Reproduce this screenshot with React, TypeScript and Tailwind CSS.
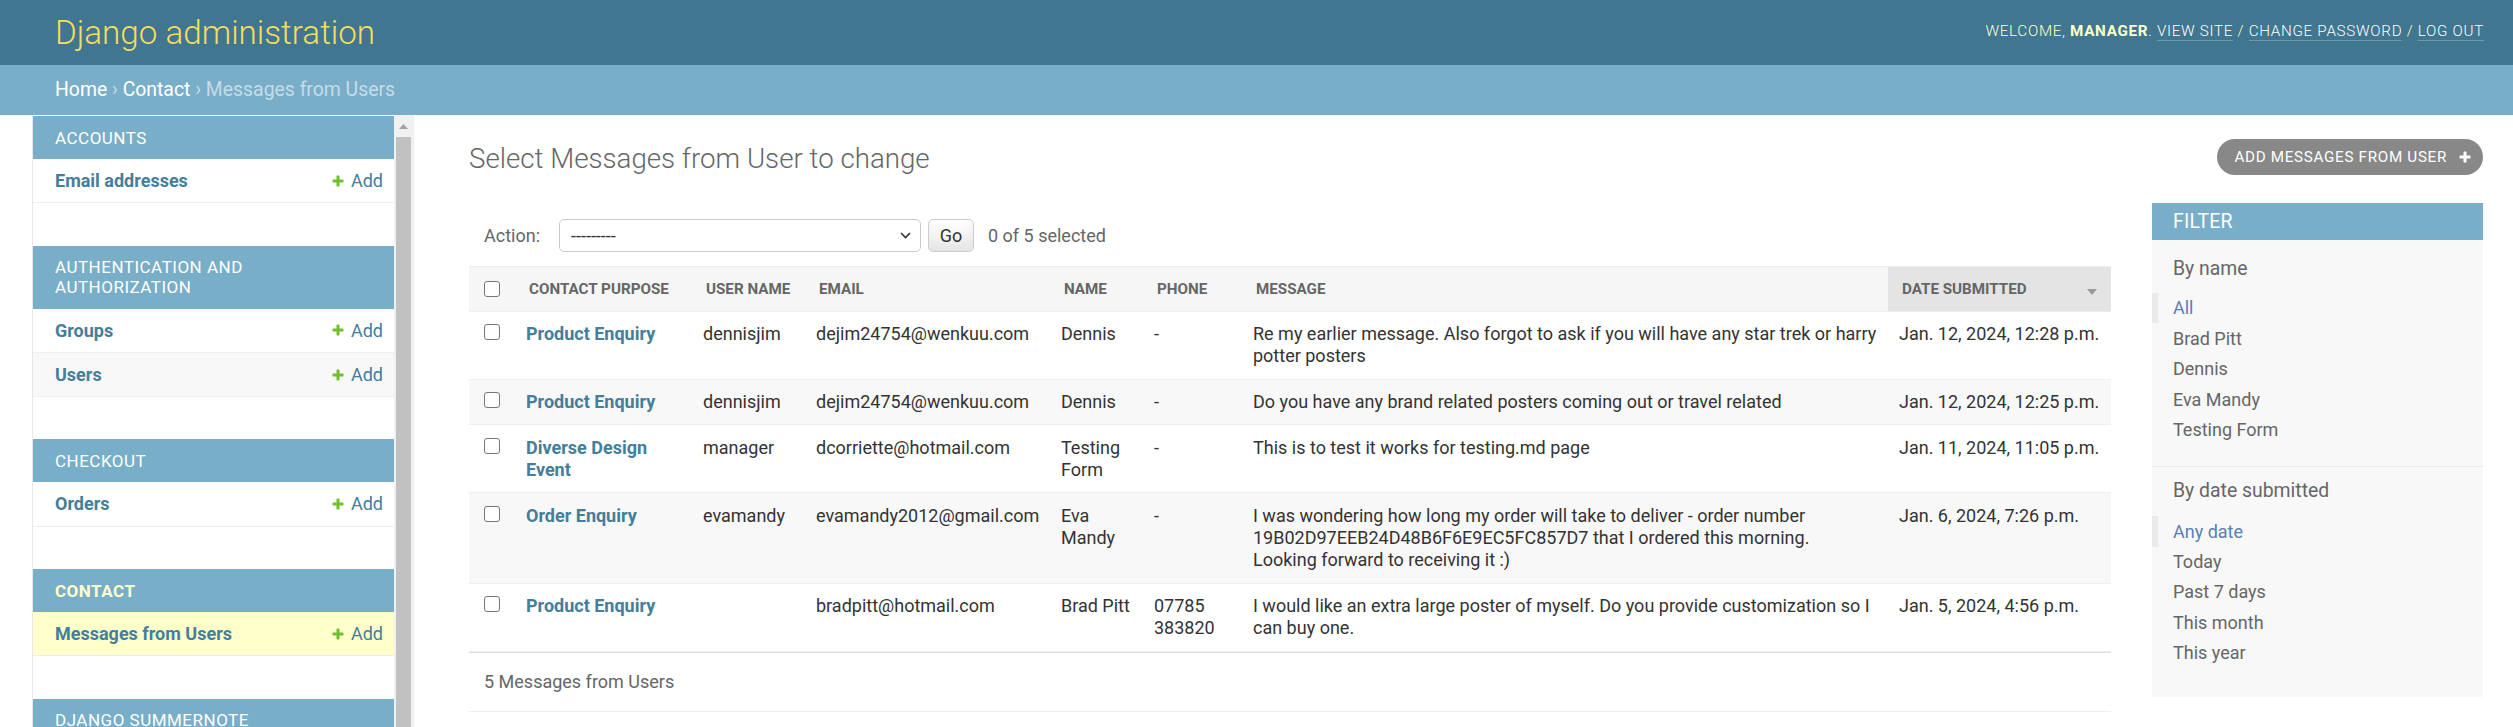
import React from "react"

const PlusIcon = ({ className = "" }: { className?: string }) => (
  <svg viewBox="0 0 1792 1792" className={className} aria-hidden="true">
    <path
      fill="currentColor"
      d="M1600 796v192q0 40-28 68t-68 28h-416v416q0 40-28 68t-68 28h-192q-40 0-68-28t-28-68v-416h-416q-40 0-68-28t-28-68v-192q0-40 28-68t68-28h416v-416q0-40 28-68t68-28h192q40 0 68 28t28 68v416h416q40 0 68 28t28 68z"
    />
  </svg>
)

const Checkbox = ({ className = "" }: { className?: string }) => (
  <input
    type="checkbox"
    className={`mx-auto block h-[16px] w-[16px] appearance-none rounded-[3px] border border-[#767676] bg-white ${className}`}
  />
)

const modules = [
  { name: "Accounts", models: ["Email addresses"] },
  { name: "Authentication and Authorization", models: ["Groups", "Users"] },
  { name: "Checkout", models: ["Orders"] },
  { name: "Contact", models: ["Messages from Users"], current: true },
  { name: "Django Summernote", models: ["Attachments"] },
  { name: "Home", models: ["Posters"] },
]

const rows = [
  {
    purpose: "Product Enquiry",
    user: "dennisjim",
    email: "dejim24754@wenkuu.com",
    name: "Dennis",
    phone: "-",
    message: ["Re my earlier message. Also forgot to ask if you will have any star trek or harry", "potter posters"],
    date: "Jan. 12, 2024, 12:28 p.m.",
  },
  {
    purpose: "Product Enquiry",
    user: "dennisjim",
    email: "dejim24754@wenkuu.com",
    name: "Dennis",
    phone: "-",
    message: ["Do you have any brand related posters coming out or travel related"],
    date: "Jan. 12, 2024, 12:25 p.m.",
  },
  {
    purpose: "Diverse Design Event",
    user: "manager",
    email: "dcorriette@hotmail.com",
    name: "Testing Form",
    phone: "-",
    message: ["This is to test it works for testing.md page"],
    date: "Jan. 11, 2024, 11:05 p.m.",
  },
  {
    purpose: "Order Enquiry",
    user: "evamandy",
    email: "evamandy2012@gmail.com",
    name: "Eva Mandy",
    phone: "-",
    message: [
      "I was wondering how long my order will take to deliver - order number",
      "19B02D97EEB24D48B6F6E9EC5FC857D7 that I ordered this morning.",
      "Looking forward to receiving it :)",
    ],
    date: "Jan. 6, 2024, 7:26 p.m.",
  },
  {
    purpose: "Product Enquiry",
    user: "",
    email: "bradpitt@hotmail.com",
    name: "Brad Pitt",
    phone: "07785 383820",
    message: ["I would like an extra large poster of myself. Do you provide customization so I", "can buy one."],
    date: "Jan. 5, 2024, 4:56 p.m.",
  },
]

const filters = [
  { title: "By name", items: ["All", "Brad Pitt", "Dennis", "Eva Mandy", "Testing Form"] },
  { title: "By date submitted", items: ["Any date", "Today", "Past 7 days", "This month", "This year"] },
]

const columns = ["Contact purpose", "User name", "Email", "Name", "Phone", "Message"]

export default function App() {
  return (
    <div className="flex h-screen flex-col overflow-hidden bg-white font-['Roboto',sans-serif] text-[#333]">
      <header className="flex h-[65px] shrink-0 items-center justify-between bg-[#417690] pl-[55px] pr-[29px]">
        <a className="text-[33.2px] font-light text-[#f5dd5d]">Django administration</a>
        <div className="pb-[3px] text-[15.2px] font-light uppercase leading-[26px] tracking-[0.7px] text-[#ffc]">
          Welcome, <strong className="font-bold">manager</strong>.{" "}
          <a className="border-b border-white/25 text-white">View site</a> /{" "}
          <a className="border-b border-white/25 text-white">Change password</a> /{" "}
          <a className="border-b border-white/25 text-white">Log out</a>
        </div>
      </header>

      <div className="flex h-[50px] shrink-0 items-center bg-[#79aec8] px-[55px] text-[19.4px] text-[#c4dce8]">
        <a className="text-white">Home</a>&nbsp;›&nbsp;<a className="text-white">Contact</a>&nbsp;›&nbsp;Messages from Users
      </div>

      <div className="flex min-h-0 flex-1">
        <div className="w-[33px] shrink-0 border-r border-[#e8e8e8]" />

        <aside className="flex w-[381px] shrink-0 border-r border-[#eee]">
          <div className="min-w-0 flex-1 overflow-hidden pt-[1px]">
            {modules.map((m) => (
              <div key={m.name} className="mb-[42.3px]">
                <div
                  className={`bg-[#79aec8] px-[22px] py-[11.5px] text-[17px] uppercase leading-[20px] tracking-[0.5px] ${
                    m.current ? "font-bold text-[#ffc]" : "text-white"
                  }`}
                >
                  {m.name}
                </div>
                {m.models.map((model, i) => (
                  <div
                    key={model}
                    className={`flex items-center justify-between border-b border-[#eee] py-[11px] pl-[22px] pr-[11px] text-[18px] leading-[21.3px] text-[#447e9b] ${
                      m.current ? "bg-[#ffc]" : i % 2 === 1 ? "bg-[#f8f8f8]" : "bg-white"
                    }`}
                  >
                    <a className="font-bold">{model}</a>
                    <a className="flex items-center gap-[6px]">
                      <PlusIcon className="h-[14px] w-[14px] text-[#70bf2b]" />
                      Add
                    </a>
                  </div>
                ))}
              </div>
            ))}
          </div>
          <div className="flex w-[19px] shrink-0 flex-col bg-[#f1f1f1]">
            <div className="flex h-[22px] items-center justify-center">
              <svg width="9" height="5" viewBox="0 0 9 5">
                <path d="M0 5 L4.5 0 L9 5Z" fill="#a3a3a3" />
              </svg>
            </div>
            <div className="mx-[2px] flex-1 bg-[#c1c1c1]" />
          </div>
        </aside>

        <main className="min-w-0 flex-1 pl-[55px] pr-[30px] pt-[24px]">
          <div className="flex items-end justify-between">
            <h1 className="text-[27.7px] font-light leading-[32.5px] text-[#666]">Select Messages from User to change</h1>
            <a className="flex h-[36px] items-center gap-[11px] rounded-full bg-[#888] pl-[17px] pr-[11px] text-[15.2px] uppercase tracking-[0.7px] text-white">
              Add Messages from User
              <PlusIcon className="h-[14px] w-[14px]" />
            </a>
          </div>

          <div className="mt-[27.7px] flex items-start">
            <div className="min-w-0 flex-1">
              <div className="flex items-center pb-[14px] pl-[15px] pt-[16px] text-[18px] text-[#666]">
                <label>Action:</label>
                <div className="ml-[19px] flex h-[33px] w-[362px] items-center justify-between rounded-[5px] border border-[#ccc] bg-white pl-[11px] pr-[9px] text-[#333]">
                  <span>---------</span>
                  <svg width="11" height="7" viewBox="0 0 11 7">
                    <path d="M1 1 L5.5 5.5 L10 1" fill="none" stroke="#333" strokeWidth="1.6" />
                  </svg>
                </div>
                <button className="ml-[7px] h-[33px] w-[46px] rounded-[5px] border border-[#ccc] bg-white text-[18px] text-[#333] shadow-[inset_0_-21px_28px_-14px_rgba(0,0,0,0.15)]">
                  Go
                </button>
                <span className="ml-[14px]">0 of 5 selected</span>
              </div>

              <table className="w-full table-fixed border-collapse">
                <colgroup>
                  <col className="w-[46px]" />
                  <col className="w-[177px]" />
                  <col className="w-[113px]" />
                  <col className="w-[245px]" />
                  <col className="w-[93px]" />
                  <col className="w-[99px]" />
                  <col className="w-[646px]" />
                  <col className="w-[223px]" />
                </colgroup>
                <thead>
                  <tr>
                    <th className="border-y border-[#eee] bg-[#f6f6f6] py-[11px] align-middle">
                      <Checkbox />
                    </th>
                    {columns.map((c) => (
                      <th
                        key={c}
                        className="whitespace-nowrap border-y border-[#eee] bg-[#f6f6f6] px-[14px] py-[11px] text-left text-[15.2px] font-bold uppercase leading-[22px] text-[#666]"
                      >
                        {c}
                      </th>
                    ))}
                    <th className="whitespace-nowrap border-y border-[#eee] bg-[#e4e4e4] px-[14px] py-[11px] text-left text-[15.2px] font-bold uppercase leading-[22px] text-[#666]">
                      <div className="flex items-center justify-between">
                        <span>Date submitted</span>
                        <svg width="10" height="6" viewBox="0 0 10 6" className="mt-[6px]">
                          <path d="M0 0 L10 0 L5 6Z" fill="#9a9a9a" />
                        </svg>
                      </div>
                    </th>
                  </tr>
                </thead>
                <tbody className="text-[18px] leading-[22.2px]">
                  {rows.map((r, i) => (
                    <tr key={i} className={i % 2 === 1 ? "bg-[#f8f8f8]" : "bg-white"}>
                      <td className="border-b border-[#eee] px-[11px] py-[11.3px] align-top">
                        <Checkbox className="mt-[1px]" />
                      </td>
                      <th className="border-b border-[#eee] px-[11px] py-[11.3px] text-left align-top font-bold text-[#447e9b]">
                        <a>{r.purpose}</a>
                      </th>
                      <td className="border-b border-[#eee] px-[11px] py-[11.3px] align-top">{r.user}</td>
                      <td className="whitespace-nowrap border-b border-[#eee] px-[11px] py-[11.3px] align-top">{r.email}</td>
                      <td className="border-b border-[#eee] px-[11px] py-[11.3px] align-top">{r.name}</td>
                      <td className="border-b border-[#eee] px-[11px] py-[11.3px] align-top">{r.phone}</td>
                      <td className="whitespace-nowrap border-b border-[#eee] px-[11px] py-[11.3px] align-top">
                        {r.message.map((line, j) => (
                          <div key={j}>{line}</div>
                        ))}
                      </td>
                      <td className="whitespace-nowrap border-b border-[#eee] px-[11px] py-[11.3px] align-top">{r.date}</td>
                    </tr>
                  ))}
                </tbody>
              </table>

              <p className="border-y border-b-[#eee] border-t-[#ddd] px-[15px] py-[14px] text-[18px] leading-[30px] text-[#666]">
                5 Messages from Users
              </p>
            </div>

            <div className="ml-[41px] w-[331px] shrink-0 bg-[#f8f8f8]">
              <h2 className="bg-[#79aec8] px-[21px] py-[7px] text-[19.4px] uppercase leading-[23px] tracking-[0.2px] text-white">
                Filter
              </h2>
              {filters.map((f, fi) => (
                <div key={f.title}>
                  <h3 className={`px-[21px] text-[19.4px] leading-[23px] text-[#666] ${fi === 0 ? "mt-[17px]" : "mt-[12px]"}`}>
                    {f.title}
                  </h3>
                  <ul
                    className={
                      fi === 0 ? "mt-[13px] border-b border-[#eaeaea] pb-[21px]" : "mt-[14px] pb-[28px]"
                    }
                  >
                    {f.items.map((item, j) => (
                      <li
                        key={item}
                        className={`py-[1.4px] text-[18px] leading-[27.7px] ${
                          j === 0 ? "border-l-[6px] border-[#eaeaea] pl-[15px] text-[#5b80b2]" : "px-[21px] text-[#666]"
                        }`}
                      >
                        <a>{item}</a>
                      </li>
                    ))}
                  </ul>
                </div>
              ))}
            </div>
          </div>
        </main>
      </div>
    </div>
  )
}
